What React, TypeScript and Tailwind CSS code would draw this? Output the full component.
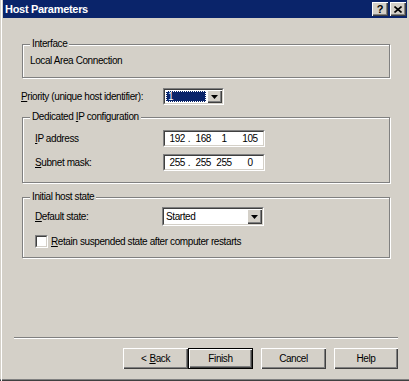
const face = "bg-[#d4d0c8]";

function Groupbox({ title, className, children }: { title: React.ReactNode; className: string; children: React.ReactNode }) {
  return (
    <div className={`relative mx-[8px] border border-[#808080] shadow-[inset_1px_1px_0_#fff,1px_1px_0_#fff] ${className}`}>
      <span className={`absolute -top-[7px] left-[7px] ${face} px-[2px] leading-[12px]`}>{title}</span>
      {children}
    </div>
  );
}

function Sunken({ className, children }: { className: string; children?: React.ReactNode }) {
  return (
    <div className={`border-t border-l border-t-[#808080] border-l-[#808080] border-b border-r border-b-white border-r-white ${className}`}>
      <div className="flex h-full w-full border-t border-l border-t-[#404040] border-l-[#404040] border-b border-r border-b-[#d4d0c8] border-r-[#d4d0c8] bg-white">
        {children}
      </div>
    </div>
  );
}

function ArrowButton() {
  return (
    <div className={`flex h-full w-[15px] shrink-0 items-center justify-center ${face} shadow-[inset_1px_1px_0_#fff,inset_-1px_-1px_0_#404040,inset_-2px_-2px_0_#808080]`}>
      <svg width="7" height="4" viewBox="0 0 7 4">
        <path d="M0 0h7L3.5 4z" fill="#000" />
      </svg>
    </div>
  );
}

function Button({ children, className, isDefault }: { children: React.ReactNode; className: string; isDefault?: boolean }) {
  return (
    <div
      className={`flex h-[21px] items-center justify-center ${face} leading-[12px] ${className} ${
        isDefault
          ? "border border-black shadow-[inset_1px_1px_0_#fff,inset_-1px_-1px_0_#404040,inset_-2px_-2px_0_#808080]"
          : "shadow-[inset_1px_1px_0_#fff,inset_-1px_-1px_0_#404040,inset_-2px_-2px_0_#808080]"
      }`}
    >
      {children}
    </div>
  );
}

function IpField({ parts }: { parts: string[] }) {
  return (
    <Sunken className="h-[17px] w-[102px]">
      <div className="flex w-full items-center leading-[12px]">
        <span className="w-[20px] text-right">{parts[0]}</span>
        <span className="w-[8px] text-center">.</span>
        <span className="w-[18px] text-right">{parts[1]}</span>
        <span className="w-[26px] text-center">{parts[2]}</span>
        <span className="w-[26px] text-center">{parts[3]}</span>
      </div>
    </Sunken>
  );
}

export default function App() {
  return (
    <div
      className={`flex h-[381px] w-[409px] overflow-hidden ${face} pl-[1px] font-['Liberation_Sans',Arial,sans-serif] text-[10px] tracking-[-0.4px] text-black shadow-[inset_0_-1px_0_#404040,inset_0_-2px_0_#808080]`}
    >
      <div className="flex flex-1 flex-col border-l border-white">
        <div className="mr-[2px] ml-[1px] flex h-[18px] items-center justify-between bg-[#0a246a] pr-[1px] pl-[2px]">
          <span className="text-[11px] font-bold tracking-[-0.3px] text-white">Host Parameters</span>
          <div className="flex gap-[2px]">
            <div className={`flex h-[14px] w-[16px] items-center justify-center ${face} text-[11px] font-bold tracking-normal shadow-[inset_1px_1px_0_#fff,inset_-1px_-1px_0_#404040,inset_-2px_-2px_0_#808080]`}>
              ?
            </div>
            <div className={`flex h-[14px] w-[16px] items-center justify-center ${face} shadow-[inset_1px_1px_0_#fff,inset_-1px_-1px_0_#404040,inset_-2px_-2px_0_#808080]`}>
              <svg width="8" height="7" viewBox="0 0 8 7">
                <path d="M0.5 0.5L7.5 6.5M7.5 0.5L0.5 6.5" stroke="#000" strokeWidth="1.6" />
              </svg>
            </div>
          </div>
        </div>

        <div className="flex flex-1 flex-col px-[12px] pr-[11px]">
          <Groupbox title="Interface" className="mt-[26px] h-[34px]">
            <div className="pt-[10px] pl-[7px] leading-[12px]">Local Area Connection</div>
          </Groupbox>

          <div className="mt-[10px] ml-[7px] flex h-[17px] items-center">
            <span className="w-[142px]">
              <span className="underline">P</span>riority (unique host identifier):
            </span>
            <Sunken className="h-[17px] w-[61px]">
              <div className="flex w-full p-[1px]">
                <div className="flex flex-1 items-center border border-dotted border-white bg-[#0a246a] pl-[1px] leading-[12px] text-white">
                  1
                </div>
              </div>
              <ArrowButton />
            </Sunken>
          </div>

          <Groupbox
            title={
              <>
                Dedicated <span className="underline">I</span>P configuration
              </>
            }
            className="mt-[12px] h-[66px]"
          >
            <div className="flex flex-col gap-[7px] pt-[12px] pl-[12px]">
              <div className="flex items-center">
                <span className="w-[128px]">
                  <span className="underline">I</span>P address
                </span>
                <IpField parts={["192", "168", "1", "105"]} />
              </div>
              <div className="flex items-center">
                <span className="w-[128px]">
                  <span className="underline">S</span>ubnet mask:
                </span>
                <IpField parts={["255", "255", "255", "0"]} />
              </div>
            </div>
          </Groupbox>

          <Groupbox title="Initial host state" className="mt-[14px] h-[61px]">
            <div className="flex flex-col pt-[9px] pl-[12px]">
              <div className="flex items-center">
                <span className="w-[127px]">
                  <span className="underline">D</span>efault state:
                </span>
                <Sunken className="h-[19px] w-[102px]">
                  <div className="flex flex-1 items-center pl-[2px] leading-[12px]">Started</div>
                  <ArrowButton />
                </Sunken>
              </div>
              <div className="mt-[9px] flex items-center">
                <Sunken className="h-[13px] w-[13px]" />
                <span className="ml-[3px] leading-[12px]">
                  <span className="underline">R</span>etain suspended state after computer restarts
                </span>
              </div>
            </div>
          </Groupbox>

          <div className="mt-[79px] h-[2px] border-t border-b border-t-[#808080] border-b-white" />

          <div className="mt-[9px] flex justify-end">
            <Button className="w-[65px]">
              &lt; <span className="ml-[3px] underline">B</span>ack
            </Button>
            <Button className="w-[65px]" isDefault>
              Finish
            </Button>
            <Button className="ml-[8px] w-[65px]">Cancel</Button>
            <Button className="ml-[8px] w-[64px]">Help</Button>
          </div>
        </div>
      </div>
    </div>
  );
}
